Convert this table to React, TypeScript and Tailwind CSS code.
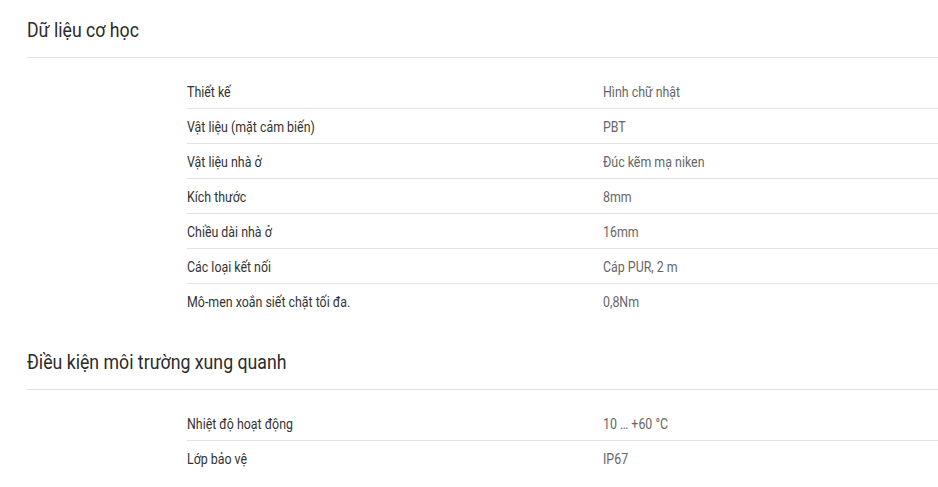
const sections = [
  {
    title: "Dữ liệu cơ học",
    rows: [
      ["Thiết kế", "Hình chữ nhật"],
      ["Vật liệu (mặt cảm biến)", "PBT"],
      ["Vật liệu nhà ở", "Đúc kẽm mạ niken"],
      ["Kích thước", "8mm"],
      ["Chiều dài nhà ở", "16mm"],
      ["Các loại kết nối", "Cáp PUR, 2 m"],
      ["Mô-men xoắn siết chặt tối đa.", "0,8Nm"],
    ],
  },
  {
    title: "Điều kiện môi trường xung quanh",
    rows: [
      ["Nhiệt độ hoạt động", "10 … +60 °C"],
      ["Lớp bảo vệ", "IP67"],
    ],
  },
];

// condensed look: no Roboto Condensed installed, so squeeze Roboto
const Narrow = ({ children }: { children: string }) => (
  <span className="inline-block origin-left scale-x-[0.885] whitespace-nowrap">
    {children}
  </span>
);

const App = () => {
  return (
    <div className="bg-white pl-[27px] font-['Roboto',sans-serif]">
      {sections.map((s) => (
        <section key={s.title} className="pb-[13px]">
          <h2 className="pt-4 pb-[13px] text-[20px] leading-7 text-[#2b2b2b] border-b border-[#e2e2e2]">
            <Narrow>{s.title}</Narrow>
          </h2>
          <div className="mt-4 ml-[160px]">
            {s.rows.map(([label, value], i) => (
              <div
                key={label}
                className={
                  "flex h-[35px] items-center pt-[2px] text-[14px] " +
                  (i < s.rows.length - 1 ? "border-b border-[#e2e2e2]" : "")
                }
              >
                <div className="w-[416px] text-[#333]">
                  <Narrow>{label}</Narrow>
                </div>
                <div className="text-[#666]">
                  <Narrow>{value}</Narrow>
                </div>
              </div>
            ))}
          </div>
        </section>
      ))}
    </div>
  );
};

export default App;
